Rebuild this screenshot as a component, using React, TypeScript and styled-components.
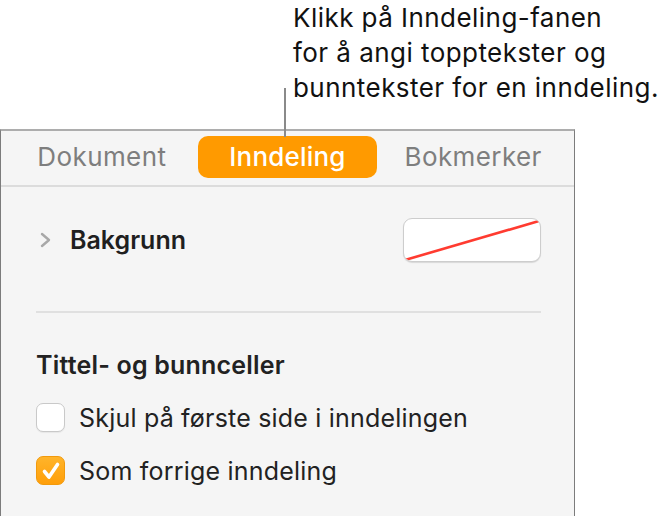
import React from "react";
import styled, { createGlobalStyle, css } from "styled-components";

const Global = createGlobalStyle`
  *, *::before, *::after { box-sizing: border-box; }
  html, body { margin: 0; padding: 0; background: #ffffff; }
  body { font-family: Inter, "Noto Sans", "Liberation Sans", sans-serif; color: #1d1d1f; }
`;

const Page = styled.div`
  position: relative;
  width: 668px;
  height: 516px;
  overflow: hidden;
`;

const Callout = styled.p`
  margin: 0 0 0 293px;
  font-size: 26px;
  line-height: 35px;
  letter-spacing: 0.45px;
  color: #111111;
  font-weight: 400;
`;

const Leader = styled.div`
  position: absolute;
  left: 284px;
  top: 88px;
  width: 2px;
  height: 49px;
  background: #8a8a8a;
  z-index: 2;
`;

const Panel = styled.section`
  margin-top: 24px;
  width: 575px;
  height: 400px;
  background: #f5f5f5;
  border-top: 2px solid #adadad;
  border-left: 1px solid #7c7c7c;
  border-right: 1px solid #7c7c7c;
`;

const TabBar = styled.div`
  display: grid;
  grid-template-columns: repeat(3, 1fr);
  padding: 5px 8px 0;
  height: 56px;
  border-bottom: 2px solid #dcdcdc;
`;

const Tab = styled.div<{ $active?: boolean }>`
  height: 42px;
  line-height: 42px;
  text-align: center;
  font-size: 26px;
  letter-spacing: 0.4px;
  color: #7e7e7e;
  border-radius: 10px;
  margin: 0 3px;
  ${(p) =>
    p.$active &&
    css`
      background: #ff9a00;
      color: #ffffff;
      font-weight: 500;
      letter-spacing: 0.2px;
    `}
`;

const Body = styled.div`
  padding: 31px 33px 0 35px;
`;

const DisclosureRow = styled.div`
  display: flex;
  align-items: center;
  height: 44px;
`;

const Chevron = styled.svg`
  width: 12px;
  height: 16px;
  margin-left: 4px;
  margin-right: 18px;
  flex: none;
`;

const RowLabel = styled.span`
  flex: 1;
  font-size: 25px;
  font-weight: 600;
  color: #1f1f1f;
`;

const ColorWell = styled.div`
  width: 138px;
  height: 44px;
  background: #ffffff;
  border: 1px solid #cdcdcd;
  border-radius: 9px;
  box-shadow: 0 1px 1px rgba(0, 0, 0, 0.12);
  overflow: hidden;
  svg { display: block; }
`;

const Divider = styled.hr`
  margin: 49px 0 0;
  border: 0;
  height: 2px;
  background: #e0e0e0;
`;

const Heading = styled.h3`
  margin: 38px 0 0;
  font-size: 25px;
  line-height: 28px;
  font-weight: 600;
  letter-spacing: 0.2px;
  color: #222222;
`;

const CheckRow = styled.label`
  display: flex;
  align-items: center;
  gap: 14px;
  height: 29px;
  margin-top: 24px;
  font-size: 25px;
  letter-spacing: 0.2px;
  color: #222222;
`;

const Box = styled.span<{ $checked?: boolean }>`
  width: 29px;
  height: 29px;
  flex: none;
  border-radius: 7px;
  display: flex;
  align-items: center;
  justify-content: center;
  ${(p) =>
    p.$checked
      ? css`
          background: linear-gradient(#ffb42a, #ff9f0a);
          border: 1px solid #f29a0c;
        `
      : css`
          background: #ffffff;
          border: 1px solid #c9c9c9;
          box-shadow: 0 1px 1px rgba(0, 0, 0, 0.06);
        `}
`;

export default function App() {
  return (
    <Page>
      <Global />
      <Callout>
        Klikk på Inndeling-fanen
        <br />
        for å angi topptekster og
        <br />
        bunntekster for en inndeling.
      </Callout>
      <Leader />
      <Panel>
        <TabBar>
          <Tab>Dokument</Tab>
          <Tab $active>Inndeling</Tab>
          <Tab>Bokmerker</Tab>
        </TabBar>
        <Body>
          <DisclosureRow>
            <Chevron viewBox="0 0 12 16">
              <path d="M2 2 L9 8 L2 14" fill="none" stroke="#a8a8a8" strokeWidth="2.4" strokeLinecap="round" strokeLinejoin="round" />
            </Chevron>
            <RowLabel>Bakgrunn</RowLabel>
            <ColorWell>
              <svg width="136" height="42" viewBox="0 0 136 42">
                <line x1="1" y1="41" x2="135" y2="2" stroke="#ff3b30" strokeWidth="2.6" />
              </svg>
            </ColorWell>
          </DisclosureRow>
          <Divider />
          <Heading>Tittel- og bunnceller</Heading>
          <CheckRow>
            <Box />
            Skjul på første side i inndelingen
          </CheckRow>
          <CheckRow>
            <Box $checked>
              <svg width="22" height="22" viewBox="0 0 22 22">
                <path d="M4.5 11.5 L9 17 L17.5 4.5" fill="none" stroke="#ffffff" strokeWidth="3.6" strokeLinecap="round" strokeLinejoin="round" />
              </svg>
            </Box>
            Som forrige inndeling
          </CheckRow>
        </Body>
      </Panel>
    </Page>
  );
}
